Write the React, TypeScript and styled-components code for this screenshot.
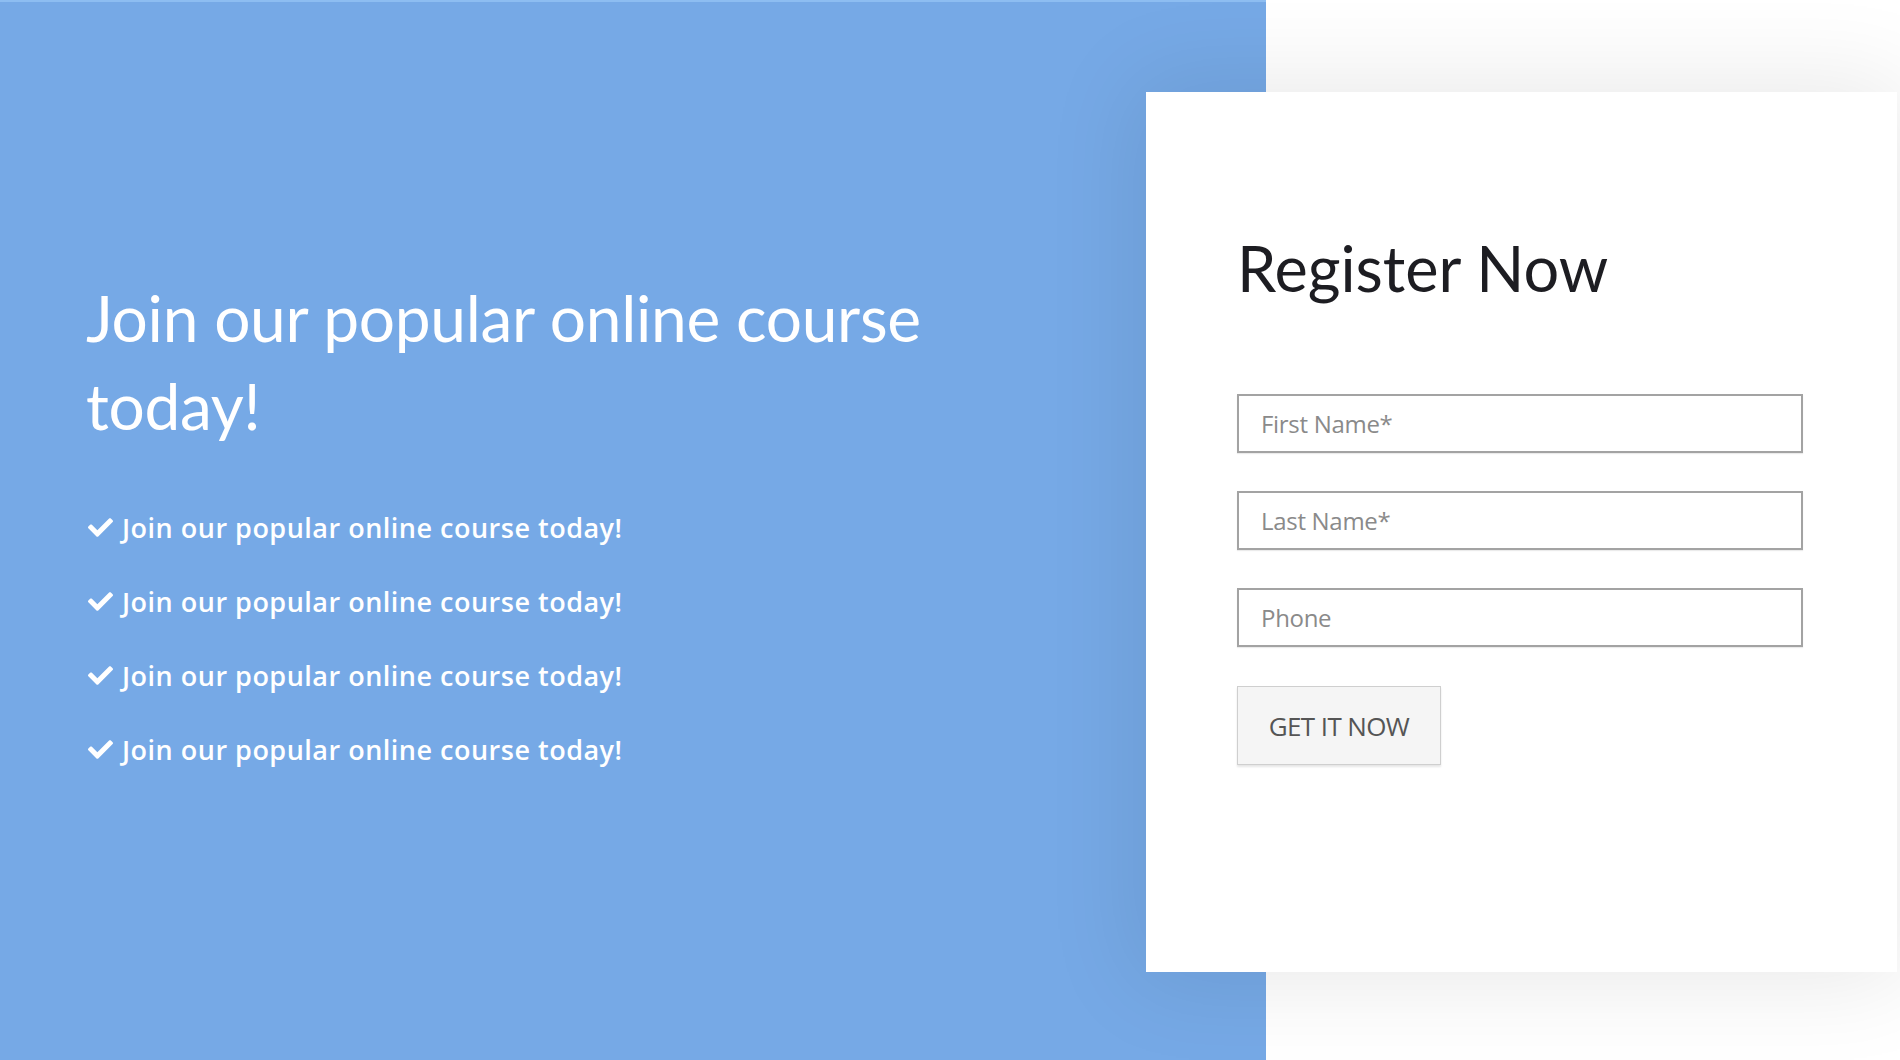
import React from "react";
import styled, { createGlobalStyle } from "styled-components";
import { FaCheck } from "react-icons/fa";

const Global = createGlobalStyle`
  html, body { margin: 0; padding: 0; background: #ffffff; }
  body { width: 1900px; height: 1060px; overflow: hidden; }
  * { box-sizing: border-box; }
`;

const Page = styled.div`
  width: 1900px;
  height: 1060px;
  display: grid;
  grid-template-columns: 1146px 120px 1fr;
  grid-template-rows: 1060px;
  background: #ffffff;
`;

const BluePanel = styled.section`
  grid-column: 1 / 3;
  grid-row: 1;
  background: #76a9e6;
  border-top: 2px solid #8dbdf1;
  padding: 272px 0 0 86px;
  display: flex;
  flex-direction: column;
`;

const Heading = styled.h1`
  margin: 0;
  width: 880px;
  font-family: Lato, "Open Sans", sans-serif;
  font-weight: 400;
  font-size: 64px;
  line-height: 88px;
  letter-spacing: -0.3px;
  color: #ffffff;
`;

const Features = styled.ul`
  list-style: none;
  margin: 40px 0 0;
  padding: 0;
  display: flex;
  flex-direction: column;
`;

const Feature = styled.li`
  display: flex;
  align-items: center;
  gap: 9px;
  height: 74px;
  font-family: "Open Sans", sans-serif;
  font-weight: 600;
  font-size: 27px;
  letter-spacing: 0.5px;
  color: #ffffff;
  svg { flex: 0 0 auto; font-size: 25px; margin-left: 2px; }
`;

const Card = styled.div`
  grid-column: 2 / 4;
  grid-row: 1;
  margin: 92px 3px 88px 0;
  background: #ffffff;
  position: relative;
  z-index: 1;
  box-shadow: 0 0 90px 10px rgba(0, 0, 0, 0.09);
  padding: 234px 94px 0 91px;
  display: flex;
  flex-direction: column;
`;

const CardTitle = styled.h2`
  margin: 0;
  font-family: Lato, "Open Sans", sans-serif;
  font-weight: 400;
  font-size: 63px;
  line-height: 1;
  color: #1d1d22;
  position: relative;
  top: -90px;
`;

const Form = styled.form`
  display: flex;
  flex-direction: column;
  gap: 38px;
  align-items: flex-start;
  margin-top: 5px;
`;

const Field = styled.input`
  width: 566px;
  height: 59px;
  border: 2px solid #a3a3a3;
  border-radius: 0;
  padding: 0 22px;
  font-family: "Open Sans", sans-serif;
  font-size: 24px;
  letter-spacing: -0.3px;
  color: #333;
  background: #fff;
  outline: none;
  box-shadow: 0 1px 1px rgba(0, 0, 0, 0.08);
  &::placeholder { color: #8a8a8a; }
`;

const Submit = styled.button`
  width: 204px;
  height: 79px;
  margin-top: 1px;
  background: #f5f5f5;
  border: 1px solid #cfcfcf;
  box-shadow: 0 2px 2px rgba(0, 0, 0, 0.1);
  font-family: "Open Sans", sans-serif;
  font-size: 26px;
  color: #555;
  letter-spacing: -0.6px;
  text-transform: uppercase;
  cursor: pointer;
`;

const items = [1, 2, 3, 4];

export default function App() {
  return (
    <>
      <Global />
      <Page>
        <BluePanel>
          <Heading>Join our popular online course today!</Heading>
          <Features>
            {items.map((i) => (
              <Feature key={i}>
                <FaCheck />
                Join our popular online course today!
              </Feature>
            ))}
          </Features>
        </BluePanel>
        <Card>
          <CardTitle>Register Now</CardTitle>
          <Form onSubmit={(e) => e.preventDefault()}>
            <Field placeholder="First Name*" />
            <Field placeholder="Last Name*" />
            <Field placeholder="Phone" />
            <Submit type="submit">Get it now</Submit>
          </Form>
        </Card>
      </Page>
    </>
  );
}
